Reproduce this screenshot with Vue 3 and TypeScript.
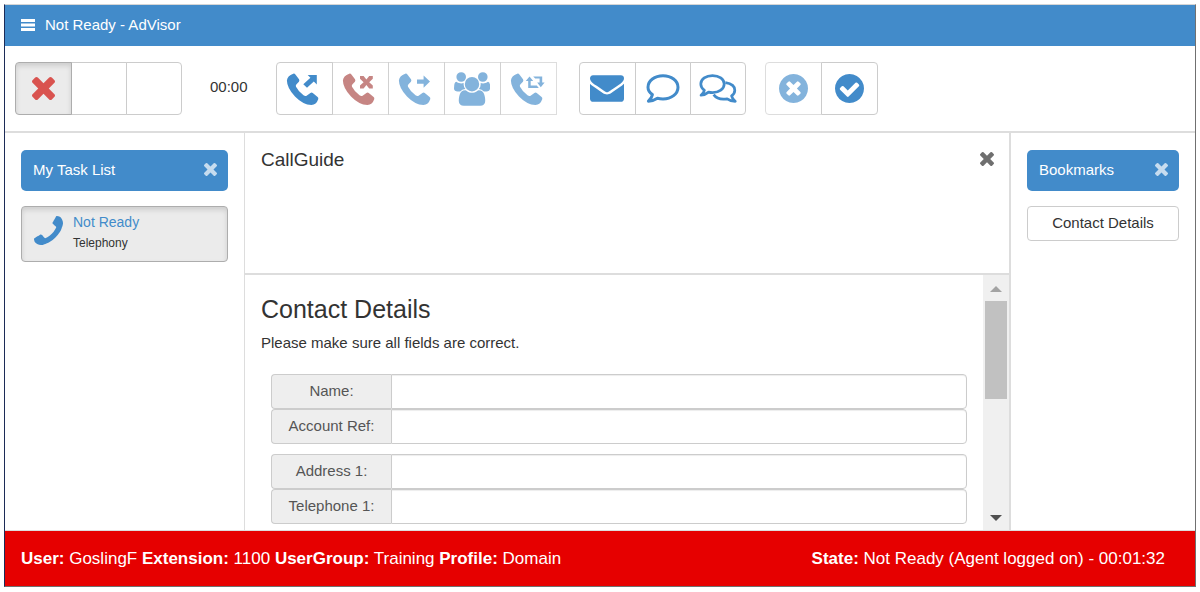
<script setup lang="ts">
import { ref } from 'vue'

interface Icon {
  viewBox: string
  width: number
  height: number
  paths: string[]
  line?: number
}

interface ToolButton {
  label: string
  icon: Icon | null
  tone: 'blue' | 'red' | 'danger'
  active?: boolean
  disabled?: boolean
}

const timesPath =
  'M1490 1322q0 40-28 68l-136 136q-28 28-68 28t-68-28l-294-294-294 294q-28 28-68 28t-68-28l-136-136q-28-28-28-68t28-68l294-294-294-294q-28-28-28-68t28-68l136-136q28-28 68-28t68 28l294 294 294-294q28-28 68-28t68 28l136 136q28 28 28 68t-28 68l-294 294 294 294q28 28 28 68z'
const phonePath =
  'M1600 1240q0 27-10 70.5t-21 68.5q-21 50-122 106-94 51-186 51-27 0-53-3.5t-57.5-12.5-47-14.5-55.5-20.5-49-18q-98-35-175-83-127-79-264-216t-216-264q-48-77-83-175-3-9-18-49t-20.5-55.5-14.5-47-12.5-57.5-3.5-53q0-92 51-186 56-101 106-122 25-11 68.5-21t70.5-10q14 0 21 3 18 6 53 76 11 19 30 54t35 63.5 31 53.5q3 4 17.5 25t21.5 35.5 7 28.5q0 20-28.5 50t-62 55-62 53-28.5 46q0 9 5 22.5t8.5 20.5 14 24 11.5 19q76 137 174 235t235 174q2 1 19 11.5t24 14 20.5 8.5 22.5 5q18 0 46-28.5t53-62 55-62 50-28.5q14 0 28.5 7t35.5 21.5 25 17.5q25 15 53.5 31t63.5 35 54 30q70 35 76 53 3 7 3 21z'
const handsetPath =
  'M9.3 3.7Q10.5 3.3 11.4 4.5L15 9.3Q15.8 10.5 14.9 11.7L12.3 14.6Q11.5 15.6 12 16.8Q14 21 19.5 25.3Q21.3 26.6 22.6 25.7L26.4 23Q27.6 22.2 28.8 23L33.6 27Q34.7 28 34.2 29.3Q32.4 34.8 27.4 35Q19 34.8 11 26.5Q3 18 2.9 10.5Q3.2 6 9.3 3.7z'
const discPath =
  'q0 209-103 385.5t-279.5 279.5-385.5 103-385.5-103-279.5-279.5-103-385.5 103-385.5 279.5-279.5 385.5-103 385.5 103 279.5 279.5 103 385.5z'

function phoneWith(overlay: string): Icon {
  return { viewBox: '0 0 40 37', width: 40, height: 37, paths: [handsetPath, overlay] }
}

const times: Icon = { viewBox: '302 366 1188 1188', width: 23, height: 23, paths: [timesPath] }

const users: Icon = {
  viewBox: '64 0 1920 1792',
  width: 36,
  height: 34,
  paths: [
    'M657 896q-162 5-265 128h-134q-82 0-138-40.5t-56-118.5q0-353 124-353 6 0 43.5 21t97.5 42.5 119 21.5q67 0 133-23-5 37-5 66 0 159 97 256zm1071 637q0 120-73 189.5t-194 69.5h-874q-121 0-194-69.5t-73-189.5q0-53 3.5-103.5t14-109 26.5-108.5 43-97.5 62-81 85.5-53.5 111.5-20q10 0 43 21.5t73 48 107 48 135 21.5 135-21.5 107-48 73-48 43-21.5q61 0 111.5 20t85.5 53.5 62 81 43 97.5 26.5 108.5 14 109 3.5 103.5zm-1024-1277q0 106-75 181t-181 75-181-75-75-181 75-181 181-75 181 75 75 181zm704 384q0 159-112.5 271.5t-271.5 112.5-271.5-112.5-112.5-271.5 112.5-271.5 271.5-112.5 271.5 112.5 112.5 271.5zm576 225q0 78-56 118.5t-138 40.5h-134q-103-123-265-128 97-97 97-256 0-29-5-66 66 23 133 23 59 0 119-21.5t97.5-42.5 43.5-21q124 0 124 353zm-128-609q0 106-75 181t-181 75-181-75-75-181 75-181 181-75 181 75 75 181z',
  ],
}

const envelope: Icon = {
  viewBox: '0 256 1792 1408',
  width: 34,
  height: 27,
  paths: [
    'M1792 710v794q0 66-47 113t-113 47h-1472q-66 0-113-47t-47-113v-794q44 49 101 87 362 246 497 345 57 42 92.5 65.5t94.5 48 110 24.5h2q51 0 110-24.5t94.5-48 92.5-65.5q170-123 498-345 57-39 100-87zm0-294q0 79-49 151t-122 123q-376 261-468 325-10 7-42.5 30.5t-54 38-52 32.5-57.5 27-50 9h-2q-23 0-50-9t-57.5-27-52-32.5-54-38-42.5-30.5q-91-64-262-182.5t-205-142.5q-62-42-117-115.5t-55-136.5q0-78 41.5-130t118.5-52h1472q65 0 112.5 47t47.5 113z',
  ],
}

const comment: Icon = {
  viewBox: '0 0 34 29',
  width: 34,
  height: 29,
  line: 3,
  paths: [
    'M6.4 20.6Q2 17.6 2 13.3C2 6.6 8.7 1.8 17 1.8S32 6.6 32 13.3 25.3 25 17 25Q14 25 11.4 24.3Q7.4 27 2.4 27.2Q5.6 24.5 6.4 20.6z',
  ],
}

const comments: Icon = {
  viewBox: '0 0 38 30',
  width: 38,
  height: 30,
  line: 2.7,
  paths: [
    'M5.4 16.3Q1.8 13.8 1.8 10C1.8 5 7 1.6 13.5 1.6S25.2 5 25.2 10 20 18.6 13.5 18.6Q11.4 18.6 9.6 18.1Q6 21 2 21.2Q4.8 19 5.4 16.3z',
    'M26.4 8.6Q35.8 10 35.8 16.2Q35.8 19.5 32.6 21.9Q33.3 25 36.2 27.4Q32 27.4 28.2 24.8Q19 26.5 14.6 20.6',
  ],
}

const timesCircle: Icon = {
  viewBox: '128 128 1536 1536',
  width: 29,
  height: 29,
  paths: [
    'M1277 1122q0-26-19-45l-181-181 181-181q19-19 19-45 0-27-19-46l-90-90q-19-19-46-19-26 0-45 19l-181 181-181-181q-19-19-45-19-27 0-46 19l-90 90q-19 19-19 46 0 26 19 45l181 181-181 181q-19 19-19 45 0 27 19 46l90 90q19 19 46 19 26 0 45-19l181-181 181 181q19 19 45 19 27 0 46-19l90-90q19-19 19-46zm387-226' +
      discPath,
  ],
}

const checkCircle: Icon = {
  viewBox: '128 128 1536 1536',
  width: 29,
  height: 29,
  paths: [
    'M1412 734q0-28-18-46l-91-90q-19-19-45-19t-45 19l-408 407-226-226q-19-19-45-19t-45 19l-91 90q-18 18-18 46 0 27 18 45l362 362q19 19 45 19 27 0 46-19l543-543q18-18 18-45zm252 162' +
      discPath,
  ],
}

const stateButtons: ToolButton[] = [
  { label: 'Not ready', icon: times, tone: 'danger', active: true },
  { label: 'State 2', icon: null, tone: 'blue' },
  { label: 'State 3', icon: null, tone: 'blue' },
]

const toolGroups: { name: string; buttons: ToolButton[] }[] = [
  {
    name: 'telephony',
    buttons: [
      { label: 'Make call', tone: 'blue', icon: phoneWith('M23.7 5H32.8V14.5L29.8 11.5 23 17.8 19.3 14.2 26.4 7.8z') },
      {
        label: 'End call',
        tone: 'red',
        disabled: true,
        icon: phoneWith('M20 6H23.6L26.4 9.4 29.2 6H32.8V8.8L29.2 12.2 32.8 15.6V18.4H29.2L26.4 15 23.6 18.4H20V15.6L23.6 12.2 20 8.8z'),
      },
      { label: 'Transfer', tone: 'blue', disabled: true, icon: phoneWith('M21 9.4H27.6V5.4L34 11.6 27.6 17.8V13.8H21z') },
      { label: 'Conference', tone: 'blue', disabled: true, icon: users },
      {
        label: 'Switch call',
        tone: 'blue',
        disabled: true,
        icon: phoneWith('M21.5 6.6L25.2 11H22.7V15.6H28.8L30.8 18H20.2V11H17.8zM25.2 6.4H34.2V12.6H36.6L32.8 17.2 29.2 12.6H31.6V8.6H27.2z'),
      },
    ],
  },
  {
    name: 'messages',
    buttons: [
      { label: 'Email', tone: 'blue', icon: envelope },
      { label: 'Message', tone: 'blue', icon: comment },
      { label: 'Chat', tone: 'blue', icon: comments },
    ],
  },
  {
    name: 'finish',
    buttons: [
      { label: 'Cancel', tone: 'blue', disabled: true, icon: timesCircle },
      { label: 'Complete', tone: 'blue', icon: checkCircle },
    ],
  },
]

const fieldGroups = [
  [
    { id: 'name', label: 'Name:' },
    { id: 'account', label: 'Account Ref:' },
  ],
  [
    { id: 'address1', label: 'Address 1:' },
    { id: 'telephone1', label: 'Telephone 1:' },
  ],
]

const values = ref<Record<string, string>>({ name: '', account: '', address1: '', telephone1: '' })

const session = [
  { label: 'User:', value: 'GoslingF' },
  { label: 'Extension:', value: '1100' },
  { label: 'UserGroup:', value: 'Training' },
  { label: 'Profile:', value: 'Domain' },
]
</script>

<template>
  <div class="page">
    <div class="window">
      <header class="titlebar">
        <button class="plain" aria-label="Menu">
          <svg width="14" height="12" viewBox="0 0 14 12" fill="currentColor">
            <path d="M0 0h14v3H0zM0 4.5h14v3H0zM0 9h14v3H0z" />
          </svg>
        </button>
        <span>Not Ready - AdVisor</span>
      </header>

      <nav class="toolbar">
        <div class="group states">
          <button
            v-for="b in stateButtons"
            :key="b.label"
            class="tool"
            :class="[b.tone, { active: b.active }]"
            :aria-label="b.label"
          >
            <svg v-if="b.icon" class="solid" :width="b.icon.width" :height="b.icon.height" :viewBox="b.icon.viewBox">
              <path v-for="d in b.icon.paths" :key="d" :d="d" />
            </svg>
          </button>
        </div>
        <span class="timer">00:00</span>
        <div v-for="g in toolGroups" :key="g.name" class="group" :class="g.name">
          <button
            v-for="b in g.buttons"
            :key="b.label"
            class="tool"
            :class="b.tone"
            :disabled="b.disabled"
            :aria-label="b.label"
          >
            <svg
              v-if="b.icon"
              :class="b.icon.line ? 'outline' : 'solid'"
              :width="b.icon.width"
              :height="b.icon.height"
              :viewBox="b.icon.viewBox"
              :stroke-width="b.icon.line"
            >
              <path v-for="d in b.icon.paths" :key="d" :d="d" />
            </svg>
          </button>
        </div>
      </nav>

      <div class="columns">
        <aside class="side tasks">
          <div class="heading">
            <span>My Task List</span>
            <button class="plain close" aria-label="Close task list">
              <svg class="solid" width="13" height="13" viewBox="302 366 1188 1188"><path :d="timesPath" /></svg>
            </button>
          </div>
          <button class="task">
            <svg class="solid" width="29" height="29" viewBox="192 128 1408 1408">
              <path :d="phonePath" transform="translate(1792 0) scale(-1 1)" />
            </svg>
            <span class="task-text">
              <span class="task-state">Not Ready</span>
              <span class="task-kind">Telephony</span>
            </span>
          </button>
        </aside>

        <main class="center">
          <section class="guide">
            <h2>CallGuide</h2>
            <button class="plain close dark" aria-label="Close call guide">
              <svg class="solid" width="14" height="14" viewBox="302 366 1188 1188"><path :d="timesPath" /></svg>
            </button>
          </section>
          <section class="details">
            <form class="form" @submit.prevent>
              <h1>Contact Details</h1>
              <p>Please make sure all fields are correct.</p>
              <div v-for="(fields, i) in fieldGroups" :key="i" class="fields">
                <div v-for="f in fields" :key="f.id" class="field">
                  <label :for="f.id">{{ f.label }}</label>
                  <input :id="f.id" v-model="values[f.id]" type="text" />
                </div>
              </div>
            </form>
            <div class="scrollbar" aria-hidden="true">
              <svg class="up" width="12" height="6" viewBox="0 0 12 6"><path d="M6 0l6 6H0z" /></svg>
              <div class="thumb"></div>
              <svg class="down" width="12" height="6" viewBox="0 0 12 6"><path d="M0 0h12L6 6z" /></svg>
            </div>
          </section>
        </main>

        <aside class="side bookmarks">
          <div class="heading">
            <span>Bookmarks</span>
            <button class="plain close" aria-label="Close bookmarks">
              <svg class="solid" width="13" height="13" viewBox="302 366 1188 1188"><path :d="timesPath" /></svg>
            </button>
          </div>
          <button class="bookmark">Contact Details</button>
        </aside>
      </div>

      <footer class="status">
        <div>
          <template v-for="s in session" :key="s.label"><b>{{ s.label }}</b>{{ ` ${s.value} ` }}</template>
        </div>
        <div><b>State:</b> Not Ready (Agent logged on) - 00:01:32</div>
      </footer>
    </div>
  </div>
</template>

<style>
body {
  margin: 0;
  background: #fff;
}
</style>

<style scoped>
.page,
.page * {
  box-sizing: border-box;
}

.page {
  height: 100vh;
  padding: 4px 4px 5px;
  color: #333;
  font-family: "Liberation Sans", Arial, sans-serif;
  font-size: 15px;
  line-height: 21px;
}

button,
input {
  margin: 0;
  font: inherit;
  color: inherit;
}

svg {
  display: block;
  flex: none;
}

.solid {
  fill: currentColor;
}

.outline {
  fill: none;
  stroke: currentColor;
  stroke-linejoin: round;
}

.window {
  display: flex;
  flex-direction: column;
  height: 100%;
  border: 1px solid #707070;
  border-top-color: #d5d5d5;
  border-left-color: #1c2b57;
}

.plain {
  display: block;
  padding: 0;
  border: 0;
  background: none;
}

.titlebar {
  display: flex;
  align-items: center;
  gap: 10px;
  padding: 9px 16px 11px;
  color: #fff;
  background: #428bca;
}

.toolbar {
  display: flex;
  align-items: center;
  padding: 16px 10px;
  border-bottom: 2px solid #ddd;
}

.group {
  display: flex;
}

.timer {
  margin: 0 28px;
  padding-bottom: 4px;
}

.messages {
  margin-left: 22px;
}

.finish {
  margin-left: 19px;
}

.tool {
  display: flex;
  align-items: center;
  justify-content: center;
  width: 57px;
  height: 53px;
  padding: 0;
  color: #428bca;
  background: #fff;
  border: 1px solid #ccc;
}

.states .tool + .tool,
.messages .tool + .tool {
  width: 56px;
}

.tool + .tool {
  margin-left: -1px;
}

.tool:first-child {
  border-radius: 4px 0 0 4px;
}

.tool:last-child {
  border-radius: 0 4px 4px 0;
}

.telephony .tool:last-child {
  border-radius: 0;
}

.tool.red {
  color: #a94442;
}

.tool.danger {
  color: #d9534f;
}

.tool:disabled {
  opacity: 0.65;
}

.tool.active {
  z-index: 1;
  background: #ebebeb;
  border-color: #adadad;
  box-shadow: inset 0 3px 5px rgba(0, 0, 0, 0.125);
}

.columns {
  display: flex;
  flex: 1;
  min-height: 0;
  border-bottom: 1px solid #ddd;
}

.side {
  flex: none;
  padding: 17px 16px;
}

.tasks {
  width: 240px;
  border-right: 1px solid #ddd;
}

.bookmarks {
  width: 186px;
  border-left: 2px solid #ddd;
}

.heading {
  display: flex;
  align-items: center;
  justify-content: space-between;
  margin-bottom: 15px;
  padding: 9px 11px 11px 12px;
  color: #fff;
  background: #428bca;
  border-radius: 5px;
}

.close {
  opacity: 0.7;
}

.task {
  display: flex;
  align-items: flex-start;
  gap: 10px;
  width: 100%;
  height: 56px;
  padding: 9px 11px 0 12px;
  text-align: left;
  background: #ebebeb;
  border: 1px solid #adadad;
  border-radius: 4px;
  box-shadow: inset 0 3px 5px rgba(0, 0, 0, 0.125);
}

.task svg {
  color: #428bca;
}

.task-text {
  display: flex;
  flex-direction: column;
  margin-top: -4px;
}

.task-state {
  color: #428bca;
  font-size: 14px;
}

.task-kind {
  font-size: 12px;
}

.bookmark {
  display: block;
  width: 100%;
  height: 35px;
  padding: 0 0 2px;
  background: #fff;
  border: 1px solid #ccc;
  border-radius: 4px;
}

.center {
  display: flex;
  flex: 1;
  flex-direction: column;
  min-width: 0;
}

.guide {
  display: flex;
  align-items: flex-start;
  justify-content: space-between;
  height: 142px;
  padding: 16px 15px 16px 16px;
  border-bottom: 2px solid #ddd;
}

.guide h2 {
  margin: 0;
  font-size: 19px;
  font-weight: 400;
}

.dark {
  padding-top: 3px;
}

.details {
  display: flex;
  flex: 1;
  min-height: 0;
}

.form {
  flex: 1;
  min-width: 0;
  padding: 20px 16px 0;
  overflow-y: auto;
  scrollbar-width: none;
}

.form h1 {
  margin: 0 0 8px;
  font-size: 25px;
  font-weight: 400;
  line-height: 29px;
}

.form p {
  margin: 0 0 21px;
}

.fields {
  margin: 0 0 10px 10px;
}

.field {
  display: flex;
  height: 35px;
}

.field label {
  width: 120px;
  padding: 5px 0;
  color: #555;
  text-align: center;
  background: #eee;
  border: 1px solid #ccc;
  border-right: 0;
  border-radius: 4px 0 0 4px;
}

.field input {
  flex: 1;
  min-width: 0;
  padding: 6px 12px;
  background: #fff;
  border: 1px solid #ccc;
  border-radius: 0 4px 4px 0;
  box-shadow: inset 0 1px 1px rgba(0, 0, 0, 0.075);
}

.scrollbar {
  display: flex;
  flex-direction: column;
  align-items: center;
  width: 26px;
  padding: 11px 0 9px;
  background: #f0f0f0;
}

.thumb {
  width: 22px;
  height: 98px;
  margin: 9px 0 auto;
  background: #c1c1c1;
}

.up {
  fill: #a3a3a3;
}

.down {
  fill: #505050;
}

.status {
  display: flex;
  justify-content: space-between;
  padding: 17px 30px 17px 16px;
  color: #fff;
  font-size: 17px;
  background: #e60000;
}
</style>
